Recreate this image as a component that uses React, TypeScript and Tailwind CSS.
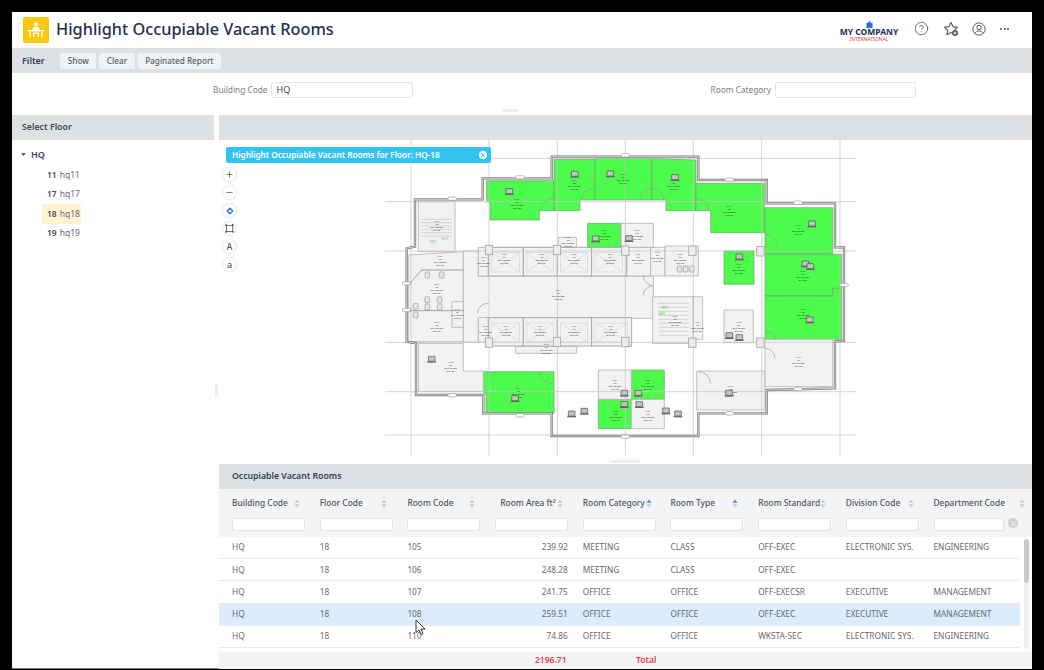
import { CircleHelp, Minus, Plus, X } from 'lucide-react';

const ink = 'font-["Noto_Sans",sans-serif]';

const columns = [
  { label: 'Building Code', sort: 'none' },
  { label: 'Floor Code', sort: 'none' },
  { label: 'Room Code', sort: 'none' },
  { label: 'Room Area ft²', sort: 'none', right: true },
  { label: 'Room Category', sort: 'up' },
  { label: 'Room Type', sort: 'up' },
  { label: 'Room Standard', sort: 'none' },
  { label: 'Division Code', sort: 'none' },
  { label: 'Department Code', sort: 'none' },
];

const rows = [
  ['HQ', '18', '105', '239.92', 'MEETING', 'CLASS', 'OFF-EXEC', 'ELECTRONIC SYS.', 'ENGINEERING'],
  ['HQ', '18', '106', '248.28', 'MEETING', 'CLASS', 'OFF-EXEC', '', ''],
  ['HQ', '18', '107', '241.75', 'OFFICE', 'OFFICE', 'OFF-EXECSR', 'EXECUTIVE', 'MANAGEMENT'],
  ['HQ', '18', '108', '259.51', 'OFFICE', 'OFFICE', 'OFF-EXEC', 'EXECUTIVE', 'MANAGEMENT'],
  ['HQ', '18', '110', '74.86', 'OFFICE', 'OFFICE', 'WKSTA-SEC', 'ELECTRONIC SYS.', 'ENGINEERING'],
];

const floors = [
  { code: '11', name: 'hq11' },
  { code: '17', name: 'hq17' },
  { code: '18', name: 'hq18', active: true },
  { code: '19', name: 'hq19' },
];

// floor plan shapes, coordinates are in the 1440x960 viewBox
const greenRooms = [
  '320,122 522,122 522,212 478,212 478,240 330,240 330,185 320,185',
  '522,58 645,58 645,180 600,180 600,212 522,212',
  '645,55 815,55 815,180 645,180',
  '815,55 948,60 948,212 858,212 858,180 815,180',
  '948,130 1153,130 1153,278 992,278 992,212 948,212',
  '1155,203 1358,203 1358,343 1155,343',
  '1155,343 1385,343 1385,445 1358,445 1358,468 1155,468',
  '1155,468 1358,468 1358,445 1385,445 1385,598 1155,598',
  '623,250 722,250 722,322 623,322',
  '1032,333 1122,333 1122,433 1032,433',
  '310,695 522,695 522,820 318,820 318,765 310,755',
  '754,690 853,690 853,778 754,778',
  '655,778 754,778 754,866 655,866',
];

const grayRooms = [
  '115,185 225,185 225,335 115,335',
  '85,345 250,335 250,605 85,605',
  '250,333 295,333 295,408 820,408 820,535 295,535 295,607 250,607',
  '295,322 325,322 325,408 295,408',
  '740,322 812,322 812,408 740,408',
  '812,322 855,322 855,408 812,408',
  '855,318 955,318 955,408 855,408',
  '295,533 325,533 325,607 295,607',
  '407,618 590,618 590,640 407,640',
  '818,470 940,470 940,610 818,610',
  '940,470 968,470 968,598 940,598',
  '723,250 820,250 820,322 723,322',
  '535,292 590,292 590,322 535,322',
  '1032,510 1120,510 1120,608 1032,608',
  '115,610 250,610 250,693 310,693 310,755 115,755',
  '655,690 754,690 754,778 655,778',
  '754,778 853,778 853,866 754,866',
  '950,693 1155,693 1155,810 950,810',
  '1155,598 1358,598 1358,740 1155,740',
  '216,485 250,485 250,562 216,562',
];

const crossRooms = [
  [325, 322, 105, 86],
  [430, 322, 102, 86],
  [532, 322, 103, 86],
  [635, 322, 105, 86],
  [325, 533, 105, 85],
  [430, 533, 102, 85],
  [532, 533, 103, 85],
  [635, 533, 120, 85],
];

const labels = [
  [170, 246], [180, 350], [170, 436], [170, 548], [232, 510], [310, 355], [372, 346], [485, 346], [582, 346], [690, 346],
  [774, 346], [832, 340], [900, 344], [316, 562], [378, 560], [480, 560], [582, 560], [692, 562], [535, 454], [499, 616],
  [564, 294], [673, 274], [771, 274], [885, 530], [953, 548], [1076, 374], [1076, 548], [212, 670], [415, 748], [705, 722],
  [803, 722], [707, 815], [803, 815], [1052, 742], [1255, 654], [1255, 258], [1268, 395], [1270, 510], [1048, 202], [411, 180],
  [583, 124], [729, 106], [881, 124],
];

const laptops = [
  [388, 155], [584, 103], [691, 102], [885, 113], [1296, 252], [647, 297], [747, 296], [1078, 351], [1276, 372], [1291, 380],
  [1289, 540], [155, 658], [405, 776], [733, 760], [775, 760], [733, 794], [778, 794], [575, 822], [613, 814], [858, 813],
  [894, 822], [1048, 587], [1078, 593], [1047, 760],
];

const bumps = [
  [217, 176], [420, 112], [736, 46], [1048, 119], [1254, 188], [1392, 435], [1254, 747], [1048, 820], [736, 890], [420, 826],
  [217, 766], [80, 430], [80, 510],
];

const pillars = [
  [316, 316], [520, 316], [725, 318], [926, 318], [1130, 320], [316, 594], [520, 592], [725, 592], [926, 594], [1130, 594],
];

const doors = [
  'M483 212 A36 36 0 0 1 519 176',
  'M603 180 A36 36 0 0 1 639 146',
  'M780 180 A32 32 0 0 1 812 146',
  'M818 146 A34 34 0 0 1 852 180',
  'M952 178 A36 36 0 0 1 988 212',
  'M1156 282 A34 34 0 0 1 1190 316',
  'M1156 578 A20 20 0 0 1 1186 598',
  'M1155 625 A30 30 0 0 1 1185 655',
  'M480 695 A36 36 0 0 0 516 730',
  'M955 695 A36 36 0 0 1 991 730',
  'M292 520 A32 32 0 0 1 326 490',
  'M790 408 A28 28 0 0 0 818 436',
  'M790 466 A28 28 0 0 1 818 438',
];

const fixtures = [
  [135, 396], [178, 396], [135, 470], [172, 470], [135, 492], [172, 492], [100, 490], [100, 516], [892, 378], [910, 378], [928, 378],
];

function FloorPlan() {
  return (
    <svg viewBox="0 0 1440 960" className="ml-[161px] block h-[320px] w-[480px] shrink-0">
      <rect width="1440" height="960" fill="#fff" />
      {greenRooms.map((p) => (
        <polygon key={p} points={p} fill="#4dfb4d" stroke="#6f9f6f" strokeWidth="2" />
      ))}
      {grayRooms.map((p) => (
        <polygon key={p} points={p} fill="#f2f2f2" stroke="#b5b5b5" strokeWidth="2.5" />
      ))}
      {crossRooms.map(([x, y, w, h]) => (
        <g key={`${x}-${y}`}>
          <rect x={x} y={y} width={w} height={h} fill="#f2f2f2" stroke="#a8a8a8" strokeWidth="3" />
          <rect x={x + 10} y={y + 16} width={w - 22} height={h - 28} fill="none" stroke="#d4d4d4" strokeWidth="2" />
          <path d={`M${x + 10} ${y + 16} L${x + w - 12} ${y + h - 12} M${x + w - 12} ${y + 16} L${x + 10} ${y + h - 12}`} stroke="#d4d4d4" strokeWidth="2" />
        </g>
      ))}
      {/* drawing grid */}
      {[93, 327, 532, 736, 940, 1145, 1380].map((x) => (
        <line key={x} x1={x} y1="0" x2={x} y2="946" stroke="#c4c4c4" strokeWidth="2.2" />
      ))}
      {[55, 185, 333, 607, 755, 885].map((y) => (
        <line key={y} x1="15" y1={y} x2="1428" y2={y} stroke="#c4c4c4" strokeWidth="2.2" />
      ))}
      <polygon
        points="105,178 308,178 308,115 515,115 515,50 955,50 955,120 1160,120 1160,190 1365,190 1365,322 1392,322 1392,602 1365,605 1365,745 1160,750 1160,820 955,820 955,888 515,888 515,820 310,820 310,765 108,765 108,610 80,605 80,325 105,320"
        fill="none"
        stroke="#777"
        strokeWidth="7"
      />
      <polygon
        points="105,178 308,178 308,115 515,115 515,50 955,50 955,120 1160,120 1160,190 1365,190 1365,322 1392,322 1392,602 1365,605 1365,745 1160,750 1160,820 955,820 955,888 515,888 515,820 310,820 310,765 108,765 108,610 80,605 80,325 105,320"
        fill="none"
        stroke="#fff"
        strokeWidth="2"
      />
      {bumps.map(([x, y]) => (
        <rect key={`${x}-${y}`} x={x - 13} y={y - 5} width="26" height="10" rx="5" fill="#fff" stroke="#999" strokeWidth="2" />
      ))}
      {pillars.map(([x, y]) => (
        <rect key={`${x}-${y}`} x={x} y={y} width="22" height="28" fill="#ececec" stroke="#a6a6a6" strokeWidth="2.5" />
      ))}
      {doors.map((d) => (
        <path key={d} d={d} fill="none" stroke="#8f9f8f" strokeWidth="2" />
      ))}
      {/* stairs */}
      {[238, 248, 258, 268, 278, 288].map((y) => (
        <line key={y} x1="125" y1={y} x2="215" y2={y} stroke="#c4c4c4" strokeWidth="2" />
      ))}
      {[490, 502, 514, 526, 538, 550, 562, 574, 586].map((y) => (
        <line key={y} x1="835" y1={y} x2="925" y2={y} stroke="#c4c4c4" strokeWidth="2" />
      ))}
      <path d="M88 432 L125 390 L250 390 M88 512 L250 512" fill="none" stroke="#a0a0a0" strokeWidth="3" />
      {fixtures.map(([x, y]) => (
        <rect key={`${x}-${y}`} x={x} y={y} width="14" height="18" rx="3" fill="#e6e6e6" stroke="#9a9a9a" strokeWidth="2" />
      ))}
      {/* the group opacity keeps these tiny labels grey instead of colour fringed */}
      <g opacity="0.9">
        {labels.map(([x, y]) => (
          <text key={`${x}-${y}`} x={x} y={y} textAnchor="middle" fontSize="7.5" fill="#111" fontFamily="Liberation Sans, sans-serif">
            <tspan x={x} dy="0">T-14</tspan>
            <tspan x={x} dy="9">18</tspan>
            <tspan x={x} dy="9">OFF-EXEC</tspan>
            <tspan x={x} dy="9">241.75</tspan>
          </text>
        ))}
      </g>
      {laptops.map(([x, y]) => (
        <g key={`${x}-${y}`}>
          <rect x={x - 10} y={y - 9} width="20" height="15" rx="1" fill="#c4c4c4" stroke="#4a4a4a" strokeWidth="2" />
          <rect x={x - 13} y={y + 6} width="26" height="4" fill="#666" />
        </g>
      ))}
      <text x="160" y="309" textAnchor="middle" fontSize="9" fill="#3fd13f" fontFamily="Liberation Sans, sans-serif">EXIT</text>
      <text x="194" y="299" textAnchor="middle" fontSize="9" fill="#3fd13f" fontFamily="Liberation Sans, sans-serif">EXIT</text>
      <text x="856" y="508" textAnchor="middle" fontSize="9" fill="#3fd13f" fontFamily="Liberation Sans, sans-serif">EXIT</text>
      <text x="846" y="524" textAnchor="middle" fontSize="9" fill="#3fd13f" fontFamily="Liberation Sans, sans-serif">EXIT</text>
    </svg>
  );
}

function SortIcon({ active }: { active?: boolean }) {
  return (
    <svg viewBox="0 0 8 12" className="h-[9px] w-[6px] shrink-0">
      <path d="M4 0.5 L7.5 5 L0.5 5 Z" fill={active ? '#3b93e8' : '#c9cdd1'} />
      <path d="M4 11.5 L7.5 7 L0.5 7 Z" fill="#c9cdd1" />
    </svg>
  );
}

function ZoomButton({ children }: { children: React.ReactNode }) {
  return (
    <div className="flex h-[13px] w-[13px] items-center justify-center rounded-full bg-white text-[9px] font-medium text-[#555] shadow-[0_0_3px_rgba(0,0,0,0.2)]">
      {children}
    </div>
  );
}

export default function App() {
  return (
    <div className={`h-[670px] w-[1044px] overflow-hidden bg-black pt-3 pl-3 ${ink}`}>
      <div className="relative flex h-[657px] w-[1020px] flex-col border-b border-[#777] bg-white">
        {/* Title bar */}
        <div className="flex h-9 shrink-0 items-center pr-[23px] pl-[11px]">
          <div className="flex h-[26px] w-[26px] items-center justify-center rounded-[2px] bg-[#fdc90f]">
            <svg viewBox="0 0 20 20" className="h-[20px] w-[20px]" fill="#fff">
              <circle cx="10" cy="4.2" r="2" />
              <path d="M6.5 10 C6.5 7.6 8 6.8 10 6.8 C12 6.8 13.5 7.6 13.5 10 Z" />
              <rect x="1.5" y="10" width="17" height="1.4" />
              <path d="M3.5 11.4 H4.8 V17 H3.5 Z M15.2 11.4 H16.5 V17 H15.2 Z M7 12.5 H13 V17 H11.8 V13.8 H8.2 V17 H7 Z" />
            </svg>
          </div>
          <h1 className="ml-[7px] pb-[2px] text-[16.3px] leading-none font-medium whitespace-nowrap text-[#1c3050]">
            Highlight Occupiable Vacant Rooms
          </h1>
          <div className="mr-[14.5px] ml-auto flex w-[60px] flex-col items-center pt-[3px]">
            <svg viewBox="0 0 8 8" className="h-[7px] w-[7px]">
              <path d="M0.5 2 H7.5 V8 H0.5 Z M3 0.2 H5 V2 H3 Z" fill="#2b6fd6" />
            </svg>
            <span className="text-[8.5px] leading-[8px] font-bold whitespace-nowrap text-[#1c2f5c]">MY COMPANY</span>
            <span className="text-[5px] leading-[7px] whitespace-nowrap text-[#d0493f]">INTERNATIONAL</span>
          </div>
          <div className="mt-[-3px] flex items-center text-[#555]">
            <CircleHelp size={15} strokeWidth={1.3} />
            <svg viewBox="0 0 16 16" className="ml-[14.5px] h-[16px] w-[16px]" fill="none" stroke="#555" strokeWidth="1.1">
              <path d="M9 12.2 L8 11.6 L3.9 13.8 L4.7 9.3 L1.5 6.2 L6 5.6 L8 1.5 L10 5.6 L14.5 6.2 L11.5 9" strokeLinejoin="round" />
              <circle cx="12" cy="12" r="3" fill="#555" stroke="none" />
              <path d="M12 10.5 V13.5 M10.5 12 H13.5" stroke="#fff" strokeWidth="0.9" />
            </svg>
            <svg viewBox="0 0 16 16" className="ml-[13px] h-[14px] w-[14px]" fill="none" stroke="#555" strokeWidth="1.1">
              <circle cx="8" cy="8" r="7" />
              <circle cx="8" cy="6.3" r="2.5" />
              <path d="M3.6 13 C4.5 10.8 6 10.2 8 10.2 C10 10.2 11.5 10.8 12.4 13" />
            </svg>
            <div className="ml-[14px] flex gap-[1.5px]">
              <span className="h-[2px] w-[2px] rounded-full bg-[#555]" />
              <span className="h-[2px] w-[2px] rounded-full bg-[#555]" />
              <span className="h-[2px] w-[2px] rounded-full bg-[#555]" />
            </div>
          </div>
        </div>

        {/* Filter bar */}
        <div className="flex h-[25px] shrink-0 items-center bg-[#dee1e4] pl-[10px]">
          <span className="mr-[15.5px] pt-[1px] text-[9px] font-semibold text-[#33425a]">Filter</span>
          <div className="flex gap-[3px]">
            {['Show', 'Clear', 'Paginated Report'].map((b) => (
              <div key={b} className="flex h-4 items-center rounded-[2px] bg-[#eff1f3] px-[7.5px] pt-[1px] text-[8.2px] font-medium whitespace-nowrap text-[#555e6b]">
                {b}
              </div>
            ))}
          </div>
        </div>

        {/* Filter form */}
        <div className="flex h-[42px] shrink-0 flex-col">
          <div className="flex h-[35px] items-center pb-[1px] text-[8.3px] text-[#7b7f85]">
            <span className="ml-[201px] whitespace-nowrap">Building Code</span>
            <div className="ml-[4px] flex h-4 w-[142px] items-center rounded-[2px] border border-[#e6e6e6] px-[4px] text-[9px] text-[#444]">HQ</div>
            <span className="ml-[297px] whitespace-nowrap">Room Category</span>
            <div className="ml-[4px] h-4 w-[141px] rounded-[2px] border border-[#e6e6e6]" />
          </div>
          <div className="mt-[1px] ml-[490px] h-[3px] w-[16px] bg-[#efefef]" />
        </div>

        {/* Body */}
        <div className="flex min-h-0 flex-1 gap-[5px]">
          <aside className="relative w-[202px] shrink-0">
            <div className="flex h-[25px] items-center bg-[#dee1e4] pl-[10px] text-[8.8px] font-semibold text-[#3c4a5c]">
              Select Floor
            </div>
            <div className="pt-[6px] pl-[9px]">
              <div className="flex h-[17px] items-center text-[9px] font-semibold text-[#33425a]">
                <svg viewBox="0 0 6 4" className="mr-[5px] h-[3px] w-[5px]">
                  <path d="M0 0 H6 L3 4 Z" fill="#555" />
                </svg>
                HQ
              </div>
              <div className="mt-[3px] ml-[21px] flex flex-col">
                {floors.map((f) => (
                  <div key={f.code} className={`flex h-[19.2px] w-[39px] items-center pl-[5px] text-[8.5px] whitespace-nowrap ${f.active ? 'bg-[#fef3d0]' : ''}`}>
                    <span className="mr-[3px] font-semibold text-[#4a4a4a]">{f.code}</span>
                    <span className="text-[#6e6480]">{f.name}</span>
                  </div>
                ))}
              </div>
            </div>
            <div className="absolute top-[268px] right-[-4px] h-[14px] w-[3px] bg-[#efefef]" />
          </aside>

          <main className="flex w-[813px] shrink-0 flex-col">
            <div className="h-[25px] shrink-0 bg-[#dee1e4]" />

            {/* Plan */}
            <div className="relative flex h-[324px] shrink-0 flex-col">
              <FloorPlan />
              <div className="absolute top-[7px] left-[7px] flex h-4 w-[265px] items-center justify-between rounded-[2px] bg-[#33c3f0] pr-[4px] pl-[6px] text-[8.2px] font-semibold whitespace-nowrap text-white">
                Highlight Occupiable Vacant Rooms for Floor: HQ-18
                <span className="flex h-[8px] w-[8px] items-center justify-center rounded-full bg-white">
                  <X size={6} strokeWidth={4} className="text-[#33c3f0]" />
                </span>
              </div>
              <div className="absolute top-[28px] left-[4px] flex flex-col gap-[5px]">
                <ZoomButton><Plus size={9} strokeWidth={2} /></ZoomButton>
                <ZoomButton><Minus size={9} strokeWidth={2} /></ZoomButton>
                <ZoomButton>
                  <svg viewBox="0 0 10 10" className="h-[8px] w-[8px]" fill="none" stroke="#2f6fe0" strokeWidth="1.6">
                    <path d="M5 1.5 L8.5 5 L5 8.5 L1.5 5 Z" />
                  </svg>
                </ZoomButton>
                <ZoomButton>
                  <svg viewBox="0 0 10 10" className="h-[9px] w-[9px]" fill="#555" stroke="#555">
                    <rect x="1.5" y="1.5" width="7" height="7" fill="none" strokeWidth="0.9" />
                    <rect x="0.5" y="0.5" width="1.6" height="1.6" strokeWidth="0.3" />
                    <rect x="7.9" y="0.5" width="1.6" height="1.6" strokeWidth="0.3" />
                    <rect x="0.5" y="7.9" width="1.6" height="1.6" strokeWidth="0.3" />
                    <rect x="7.9" y="7.9" width="1.6" height="1.6" strokeWidth="0.3" />
                  </svg>
                </ZoomButton>
                <ZoomButton>A</ZoomButton>
                <ZoomButton>a</ZoomButton>
              </div>
              <div className="absolute bottom-[1px] left-[391px] h-[3px] w-[30px] bg-[#efefef]" />
            </div>

            {/* Rooms table */}
            <div className="flex h-[25px] shrink-0 items-center bg-[#dee1e4] pl-[13px] text-[8.7px] font-semibold text-[#33425a]">
              Occupiable Vacant Rooms
            </div>
            <div className="relative flex h-[48px] shrink-0 bg-[#f3f4f6]">
              {columns.map((c, i) => (
                <div key={c.label} className={`shrink-0 pl-[13px] ${i === 8 ? 'w-[111px]' : 'w-[87.7px]'}`}>
                  <div className={`flex h-[29px] items-center justify-between text-[8.4px] font-medium whitespace-nowrap text-[#4f5560] ${i === 4 ? 'pr-[5px]' : 'pr-[7px]'}`}>
                    <span className={c.right ? 'mr-[1px] ml-auto' : ''}>{c.label}</span>
                    <SortIcon active={c.sort === 'up'} />
                  </div>
                  <div className={`h-[13px] rounded-[2px] border border-[#e3e5e8] bg-white ${i === 8 ? 'w-[70px]' : 'w-[73px]'}`} />
                </div>
              ))}
              <div className="absolute top-[29px] right-[14px] flex h-[10px] w-[10px] items-center justify-center rounded-full bg-[#cfd2d5]">
                <X size={7} strokeWidth={3} className="text-white" />
              </div>
            </div>
            <div className="relative h-[115px] shrink-0 pr-[12px]">
              {rows.map((r, ri) => (
                <div key={r[2]} className={`flex h-[22.2px] items-center border-b border-[#e9eaec] text-[8.3px] whitespace-nowrap text-[#666a70] ${ri === 3 ? 'bg-[#ddecfd]' : ''}`}>
                  {r.map((v, i) => (
                    <div key={i} className={`w-[87.7px] shrink-0 ${i === 3 ? 'pr-[2px] text-right' : 'pl-[13px]'}`}>
                      {v}
                    </div>
                  ))}
                </div>
              ))}
              <div className="absolute top-[2px] right-[3px] h-[110px] w-[5px] rounded-full bg-[#f0f1f2]">
                <div className="h-[44px] rounded-full bg-[#c6c9cc]" />
              </div>
            </div>
            <div className="flex h-[17px] shrink-0 items-center bg-[#f3f4f6] text-[8.5px] font-semibold whitespace-nowrap text-[#f0393f]">
              <div className="w-[348.5px] shrink-0 pr-[1px] text-right">2196.71</div>
              <div className="ml-[68.5px]">Total</div>
            </div>
          </main>
        </div>

        {/* mouse pointer from the capture */}
        <svg viewBox="0 0 11 17" className="absolute top-[607px] left-[403px] h-[17px] w-[11px]">
          <path d="M1 1 L1 13.5 L4 11 L6 15.5 L8 14.5 L6 10.2 L10 10 Z" fill="#fff" stroke="#222" strokeWidth="0.9" strokeLinejoin="round" />
        </svg>
      </div>
    </div>
  );
}
